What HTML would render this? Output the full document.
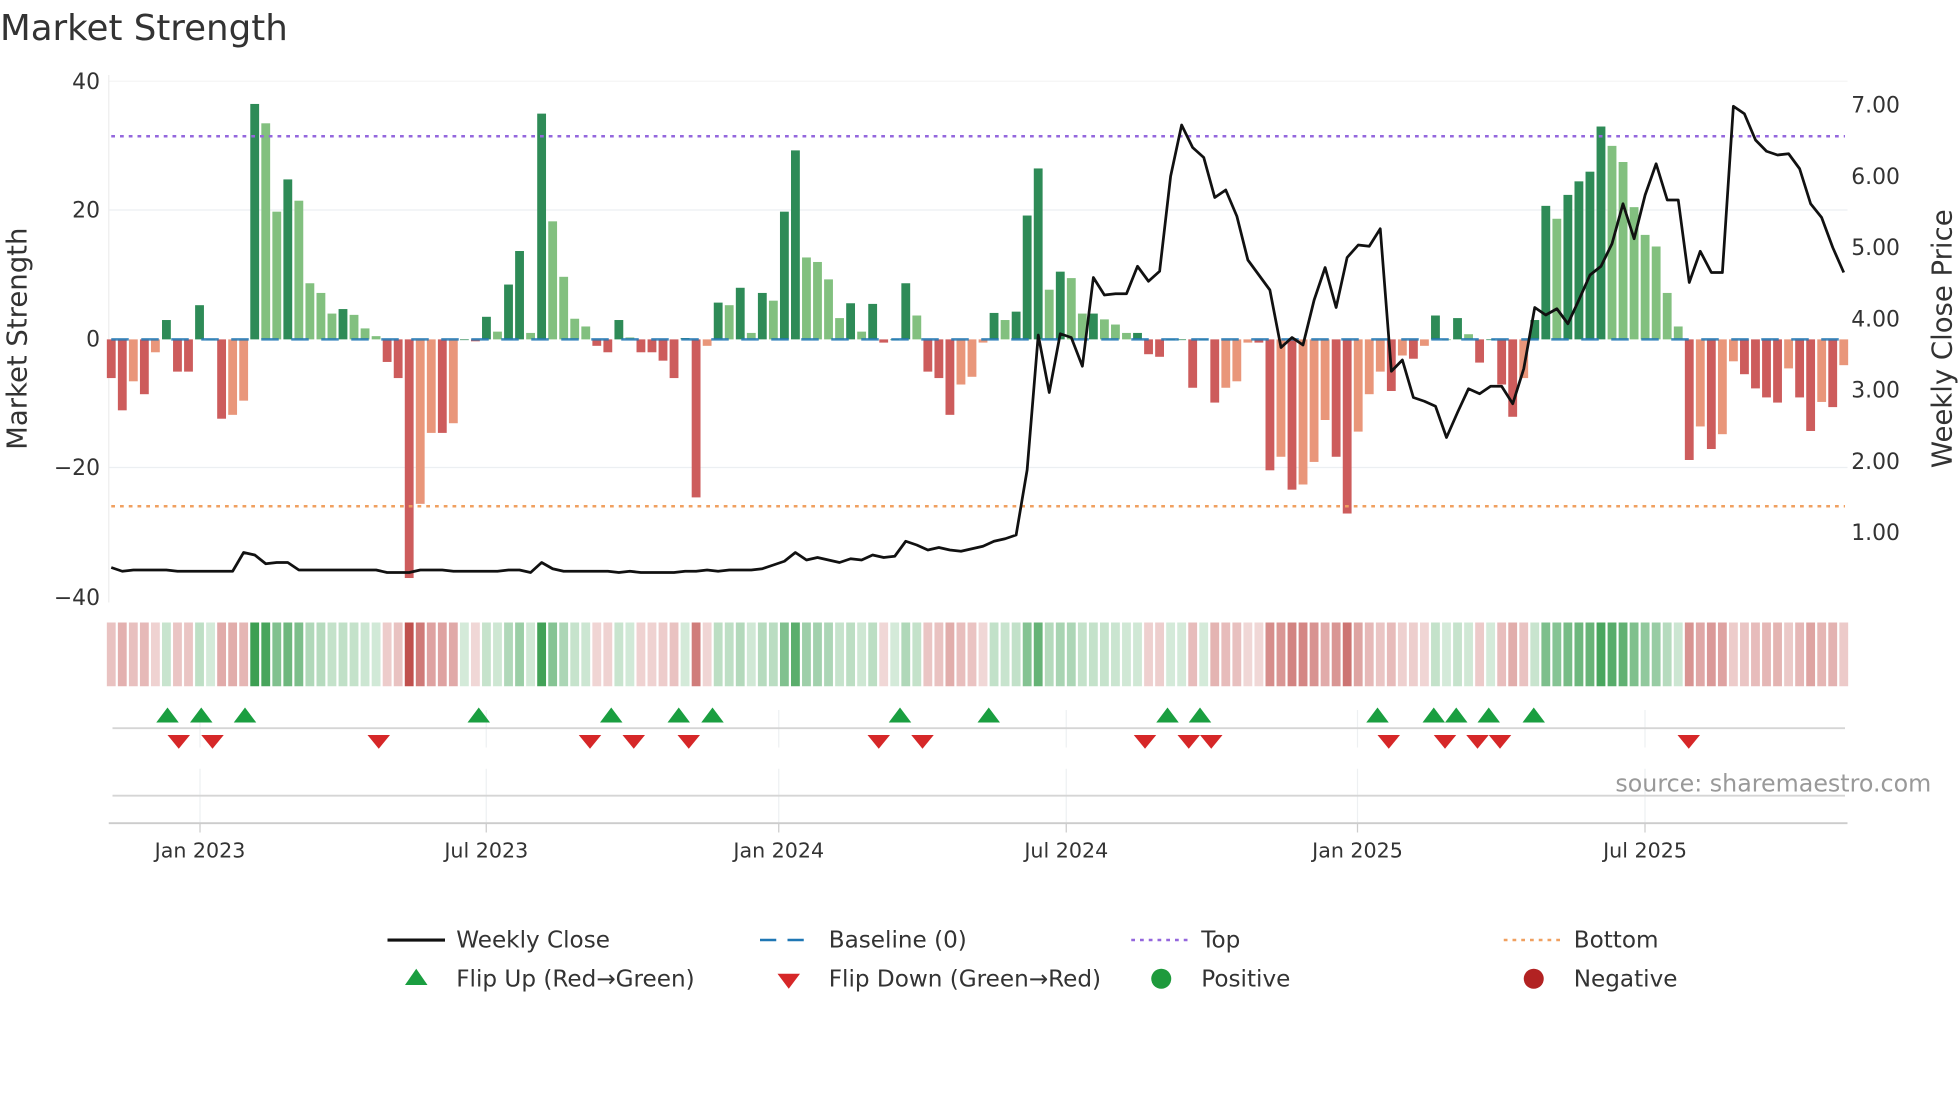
<!DOCTYPE html>
<html><head><meta charset="utf-8"><style>
html,body{margin:0;padding:0;background:#fff;width:1960px;height:1102px;overflow:hidden}
svg text{font-family:"DejaVu Sans","Liberation Sans",sans-serif}
</style></head><body>
<svg id="s" width="1960" height="1102" viewBox="0 0 1568 881.6" xmlns="http://www.w3.org/2000/svg">
<rect width="1568" height="882" fill="#fff"/>
<text x="0" y="32" font-size="28.5" fill="#333">Market Strength</text>
<g stroke="#eceff2" stroke-width="1">
<line x1="87" x2="1478" y1="168" y2="168"/><line x1="87" x2="1478" y1="374" y2="374"/>
<line x1="87" x2="1478" y1="65" y2="65" stroke="#f4f4f4"/>
</g>
<line x1="87" x2="87" y1="60" y2="482" stroke="#eee"/>
<g font-size="17.5" fill="#333" text-anchor="end">
<text x="80" y="71">40</text><text x="80" y="277">0</text><text x="80" y="174">20</text><text x="80" y="380">−20</text><text x="80" y="484">−40</text>
</g>
<g font-size="17.5" fill="#333">
<text x="1481" y="90">7.00</text><text x="1481" y="147">6.00</text><text x="1481" y="204">5.00</text><text x="1481" y="261">4.00</text><text x="1481" y="318">3.00</text><text x="1481" y="375">2.00</text><text x="1481" y="432">1.00</text>
</g>
<text transform="translate(21,271) rotate(-90)" text-anchor="middle" font-size="22" fill="#333">Market Strength</text>
<text transform="translate(1561,271) rotate(-90)" text-anchor="middle" font-size="22" fill="#333">Weekly Close Price</text>
<g id="bars"></g>
<line x1="89" x2="1476" y1="271.5" y2="271.5" stroke="#1f77b4" stroke-width="2" stroke-dasharray="14 10" opacity="0.85"/>
<line x1="89" x2="1476" y1="109" y2="109" stroke="#9467dd" stroke-width="2" stroke-dasharray="3 4"/>
<line x1="89" x2="1476" y1="405" y2="405" stroke="#f0a060" stroke-width="2" stroke-dasharray="3 4"/>
<polyline id="price" fill="none" stroke="#111" stroke-width="2.2" stroke-linejoin="round"/>
<g id="strip"></g>
<g stroke="#eef0f2" stroke-width="1">
<line x1="160" x2="160" y1="568" y2="598"/><line x1="389" x2="389" y1="568" y2="598"/><line x1="623" x2="623" y1="568" y2="598"/><line x1="853" x2="853" y1="568" y2="598"/><line x1="1086" x2="1086" y1="568" y2="598"/><line x1="1316" x2="1316" y1="568" y2="598"/>
<line x1="160" x2="160" y1="615" y2="662"/><line x1="389" x2="389" y1="615" y2="662"/><line x1="623" x2="623" y1="615" y2="662"/><line x1="853" x2="853" y1="615" y2="662"/><line x1="1086" x2="1086" y1="615" y2="662"/><line x1="1316" x2="1316" y1="615" y2="662"/>
</g>
<line x1="90" x2="1476" y1="582.5" y2="582.5" stroke="#d5d5d5" stroke-width="1.5"/>
<line x1="90" x2="1476" y1="636.5" y2="636.5" stroke="#d5d5d5" stroke-width="1.5"/>
<line x1="87" x2="1478" y1="658.5" y2="658.5" stroke="#ccc" stroke-width="1.5"/>
<g stroke="#ccc"><line x1="160" x2="160" y1="658" y2="666"/><line x1="389" x2="389" y1="658" y2="666"/><line x1="623" x2="623" y1="658" y2="666"/><line x1="853" x2="853" y1="658" y2="666"/><line x1="1086" x2="1086" y1="658" y2="666"/><line x1="1316" x2="1316" y1="658" y2="666"/></g>
<g id="marks"></g>
<text x="1545" y="633" text-anchor="end" font-size="19" fill="#999">source: sharemaestro.com</text>
<g font-size="16.5" fill="#333" text-anchor="middle">
<text x="160" y="686">Jan 2023</text><text x="389" y="686">Jul 2023</text><text x="623" y="686">Jan 2024</text><text x="853" y="686">Jul 2024</text><text x="1086" y="686">Jan 2025</text><text x="1316" y="686">Jul 2025</text>
</g>
<g font-size="18.5" fill="#333">
<line x1="310" x2="356" y1="752" y2="752" stroke="#111" stroke-width="2.5"/><text x="365" y="758">Weekly Close</text>
<line x1="608" x2="652" y1="752" y2="752" stroke="#1f77b4" stroke-width="2" stroke-dasharray="13 9"/><text x="663" y="758">Baseline (0)</text>
<line x1="905" x2="950" y1="752" y2="752" stroke="#9467dd" stroke-width="2" stroke-dasharray="3 4"/><text x="961" y="758">Top</text>
<line x1="1203" x2="1248" y1="752" y2="752" stroke="#f0a060" stroke-width="2" stroke-dasharray="3 4"/><text x="1259" y="758">Bottom</text>
<polygon points="324,788 342,788 333,775" fill="#1a9e40"/><text x="365" y="789">Flip Up (Red→Green)</text>
<polygon points="622,779 640,779 631,791" fill="#d62728"/><text x="663" y="789">Flip Down (Green→Red)</text>
<circle cx="929" cy="783" r="8" fill="#1e9a3c"/><text x="961" y="789">Positive</text>
<circle cx="1227" cy="783" r="8" fill="#b22222"/><text x="1259" y="789">Negative</text>
</g>
</svg>
<script>
var V=[-6,-11,-6.5,-8.5,-2,3,-5,-5,5.3,0,-12.3,-11.7,-9.5,36.5,33.5,19.8,24.8,21.5,8.7,7.2,4,4.7,3.8,1.7,0.5,-3.5,-6,-37,-25.5,-14.5,-14.5,-13,0,-0.3,3.5,1.2,8.5,13.7,1,35,18.3,9.7,3.2,2,-1,-2,3,0.3,-2,-2,-3.3,-6,0.2,-24.5,-1,5.7,5.3,8,1,7.2,6,19.8,29.3,12.7,12,9.3,3.3,5.6,1.2,5.5,-0.5,0,8.7,3.7,-5,-6,-11.7,-7,-5.8,-0.5,4.1,3,4.3,19.2,26.5,7.7,10.5,9.5,4,4,3.1,2.3,1,1,-2.3,-2.7,0,0,-7.5,0,-9.8,-7.5,-6.5,-0.5,-0.5,-20.3,-18.2,-23.3,-22.5,-19,-12.5,-18.2,-27,-14.3,-8.5,-5,-8,-2.5,-3,-1,3.7,0,3.3,0.8,-3.6,0,-7,-12,-6,3,20.7,18.7,22.4,24.5,26,33,30,27.5,20.5,16.2,14.4,7.2,2,-18.7,-13.5,-17,-14.7,-3.4,-5.4,-7.6,-9,-9.8,-4.5,-9,-14.2,-9.7,-10.5,-4];
var P=[454,457,456,456,456,456,457,457,457,457,457,457,442,444,451,450,450,456,456,456,456,456,456,456,456,458,458,458,456,456,456,457,457,457,457,457,456,456,458,450,455,457,457,457,457,457,458,457,458,458,458,458,457,457,456,457,456,456,456,455,452,449,442,448,446,448,450,447,448,444,446,445,433,436,440,438,440,441,439,437,433,431,428,376,268,314,267,270,293,222,236,235,235,213,225,217,141,100,118,126,158,152,173,208,220,232,278,270,276,240,214,246,206,196,197,183,297,288,318,321,325,350,330,311,315,309,309,323,295,246,252,247,259,240,220,213,195,163,191,156,131,160,160,226,201,218,218,85,91,112,121,124,123,135,163,174,198,218];
var NS="http://www.w3.org/2000/svg",b=document.getElementById('bars'),st=document.getElementById('strip'),mk=document.getElementById('marks');
function el(p,t,a){var e=document.createElementNS(NS,t);for(var k in a)e.setAttribute(k,a[k]);p.appendChild(e);return e;}
var x0=89,x1=1475,dx=(x1-x0)/(V.length-1),dp=(x1-x0)/(P.length-1),w=dx*0.8,pts=[];
for(var i=0;i<V.length;i++){var v=V[i],pv=i?V[i-1]:0,x=x0+dx*i,c;
 if(v>=0)c=(v>=pv)?'#2e8b57':'#82c07f';else c=(v<=pv)?'#cd5c5c':'#e9967a';
 var h=Math.abs(v)*5.16,y=v>=0?271.5-h:271.5;
 el(b,'rect',{x:x-w/2,y:y,width:w,height:Math.max(h,0.6),fill:c});
 var a=0.22+0.78*Math.min(Math.abs(v)/37,1);
 el(st,'rect',{x:x-w/2,y:498,width:w,height:51,fill:v>=0?'#3a9e50':'#c0504d','fill-opacity':a.toFixed(2)});
}
for(var i=0;i<P.length;i++)pts.push((x0+dp*i).toFixed(1)+','+P[i]);
document.getElementById('price').setAttribute('points',pts.join(' '));
[134,161,196,383,489,543,570,720,791,934,960,1102,1147,1165,1191,1227].forEach(function(x){el(mk,'polygon',{points:(x-9)+',578 '+(x+9)+',578 '+x+',566',fill:'#1a9e40'});});
[143,170,303,472,507,551,703,738,916,951,969,1111,1156,1182,1200,1351].forEach(function(x){el(mk,'polygon',{points:(x-9)+',588 '+(x+9)+',588 '+x+',599',fill:'#d62728'});});
</script>
</body></html>
